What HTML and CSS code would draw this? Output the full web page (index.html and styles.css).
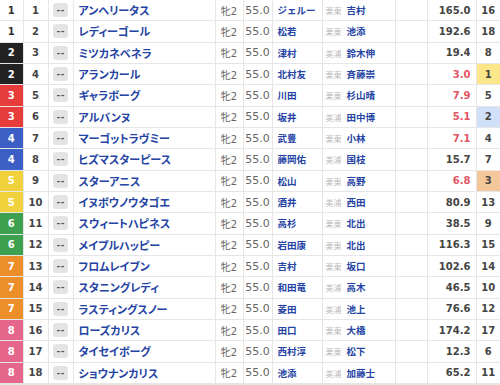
FILE: index.html
```html
<!DOCTYPE html>
<html lang="ja">
<head>
<meta charset="utf-8">
<link rel="stylesheet" href="styles.css">
</head>
<body>
<table class="race">
<colgroup>
<col class="c-waku"><col class="c-num"><col class="c-mark"><col class="c-name"><col class="c-sex"><col class="c-wt"><col class="c-jockey"><col class="c-trainer"><col class="c-blank"><col class="c-odds"><col class="c-pop">
</colgroup>
<tbody>
<tr><td class="waku w1">1</td><td class="num">1</td><td class="mark"><span class="btn">--</span></td><td class="name">アンヘリータス</td><td class="sex">牝2</td><td class="wt">55.0</td><td class="jockey">ジェルー</td><td class="trainer"><span class="area">栗東</span>吉村</td><td></td><td class="odds">165.0</td><td class="pop">16</td></tr>
<tr><td class="waku w1">1</td><td class="num">2</td><td class="mark"><span class="btn">--</span></td><td class="name">レディーゴール</td><td class="sex">牝2</td><td class="wt">55.0</td><td class="jockey">松若</td><td class="trainer"><span class="area">栗東</span>池添</td><td></td><td class="odds">192.6</td><td class="pop">18</td></tr>
<tr><td class="waku w2">2</td><td class="num">3</td><td class="mark"><span class="btn">--</span></td><td class="name">ミツカネベネラ</td><td class="sex">牝2</td><td class="wt">55.0</td><td class="jockey">津村</td><td class="trainer"><span class="area">美浦</span>鈴木伸</td><td></td><td class="odds">19.4</td><td class="pop">8</td></tr>
<tr><td class="waku w2">2</td><td class="num">4</td><td class="mark"><span class="btn">--</span></td><td class="name">アランカール</td><td class="sex">牝2</td><td class="wt">55.0</td><td class="jockey">北村友</td><td class="trainer"><span class="area">栗東</span>斉藤崇</td><td></td><td class="odds hot">3.0</td><td class="pop p1">1</td></tr>
<tr><td class="waku w3">3</td><td class="num">5</td><td class="mark"><span class="btn">--</span></td><td class="name">ギャラボーグ</td><td class="sex">牝2</td><td class="wt">55.0</td><td class="jockey">川田</td><td class="trainer"><span class="area">栗東</span>杉山晴</td><td></td><td class="odds hot">7.9</td><td class="pop">5</td></tr>
<tr><td class="waku w3">3</td><td class="num">6</td><td class="mark"><span class="btn">--</span></td><td class="name">アルバンヌ</td><td class="sex">牝2</td><td class="wt">55.0</td><td class="jockey">坂井</td><td class="trainer"><span class="area">美浦</span>田中博</td><td></td><td class="odds hot">5.1</td><td class="pop p2">2</td></tr>
<tr><td class="waku w4">4</td><td class="num">7</td><td class="mark"><span class="btn">--</span></td><td class="name">マーゴットラヴミー</td><td class="sex">牝2</td><td class="wt">55.0</td><td class="jockey">武豊</td><td class="trainer"><span class="area">栗東</span>小林</td><td></td><td class="odds hot">7.1</td><td class="pop">4</td></tr>
<tr><td class="waku w4">4</td><td class="num">8</td><td class="mark"><span class="btn">--</span></td><td class="name">ヒズマスターピース</td><td class="sex">牝2</td><td class="wt">55.0</td><td class="jockey">藤岡佑</td><td class="trainer"><span class="area">美浦</span>国枝</td><td></td><td class="odds">15.7</td><td class="pop">7</td></tr>
<tr><td class="waku w5">5</td><td class="num">9</td><td class="mark"><span class="btn">--</span></td><td class="name">スターアニス</td><td class="sex">牝2</td><td class="wt">55.0</td><td class="jockey">松山</td><td class="trainer"><span class="area">栗東</span>高野</td><td></td><td class="odds hot">6.8</td><td class="pop p3">3</td></tr>
<tr><td class="waku w5">5</td><td class="num">10</td><td class="mark"><span class="btn">--</span></td><td class="name">イヌボウノウタゴエ</td><td class="sex">牝2</td><td class="wt">55.0</td><td class="jockey">酒井</td><td class="trainer"><span class="area">美浦</span>西田</td><td></td><td class="odds">80.9</td><td class="pop">13</td></tr>
<tr><td class="waku w6">6</td><td class="num">11</td><td class="mark"><span class="btn">--</span></td><td class="name">スウィートハピネス</td><td class="sex">牝2</td><td class="wt">55.0</td><td class="jockey">高杉</td><td class="trainer"><span class="area">栗東</span>北出</td><td></td><td class="odds">38.5</td><td class="pop">9</td></tr>
<tr><td class="waku w6">6</td><td class="num">12</td><td class="mark"><span class="btn">--</span></td><td class="name">メイプルハッピー</td><td class="sex">牝2</td><td class="wt">55.0</td><td class="jockey">岩田康</td><td class="trainer"><span class="area">栗東</span>北出</td><td></td><td class="odds">116.3</td><td class="pop">15</td></tr>
<tr><td class="waku w7">7</td><td class="num">13</td><td class="mark"><span class="btn">--</span></td><td class="name">フロムレイブン</td><td class="sex">牝2</td><td class="wt">55.0</td><td class="jockey">吉村</td><td class="trainer"><span class="area">栗東</span>坂口</td><td></td><td class="odds">102.6</td><td class="pop">14</td></tr>
<tr><td class="waku w7">7</td><td class="num">14</td><td class="mark"><span class="btn">--</span></td><td class="name">スタニングレディ</td><td class="sex">牝2</td><td class="wt">55.0</td><td class="jockey">和田竜</td><td class="trainer"><span class="area">美浦</span>高木</td><td></td><td class="odds">46.5</td><td class="pop">10</td></tr>
<tr><td class="waku w7">7</td><td class="num">15</td><td class="mark"><span class="btn">--</span></td><td class="name">ラスティングスノー</td><td class="sex">牝2</td><td class="wt">55.0</td><td class="jockey">菱田</td><td class="trainer"><span class="area">美浦</span>池上</td><td></td><td class="odds">76.6</td><td class="pop">12</td></tr>
<tr><td class="waku w8">8</td><td class="num">16</td><td class="mark"><span class="btn">--</span></td><td class="name">ローズカリス</td><td class="sex">牝2</td><td class="wt">55.0</td><td class="jockey">田口</td><td class="trainer"><span class="area">栗東</span>大橋</td><td></td><td class="odds">174.2</td><td class="pop">17</td></tr>
<tr><td class="waku w8">8</td><td class="num">17</td><td class="mark"><span class="btn">--</span></td><td class="name">タイセイボーグ</td><td class="sex">牝2</td><td class="wt">55.0</td><td class="jockey">西村淳</td><td class="trainer"><span class="area">栗東</span>松下</td><td></td><td class="odds">12.3</td><td class="pop">6</td></tr>
<tr><td class="waku w8">8</td><td class="num">18</td><td class="mark"><span class="btn">--</span></td><td class="name">ショウナンカリス</td><td class="sex">牝2</td><td class="wt">55.0</td><td class="jockey">池添</td><td class="trainer"><span class="area">美浦</span>加藤士</td><td></td><td class="odds">65.2</td><td class="pop">11</td></tr>
</tbody>
</table>
</body>
</html>
```

FILE: styles.css
```css
html, body {
  margin: 0;
  padding: 0;
  background: #ffffff;
}
body {
  font-family: "DejaVu Sans", "Noto Sans CJK JP", sans-serif;
  font-size: 10px;
  color: #333;
}
.race {
  border-collapse: collapse;
  table-layout: fixed;
  width: 500px;
  border-bottom: 2px solid #e6e6e6;
}
.c-waku { width: 23px; }
.c-num { width: 25px; }
.c-mark { width: 25px; }
.c-name { width: 142px; }
.c-sex { width: 28px; }
.c-wt { width: 29px; }
.c-jockey { width: 50px; }
.c-trainer { width: 73px; }
.c-blank { width: 32px; }
.c-odds { width: 49px; }
.c-pop { width: 24px; }

.race td {
  border: 1px solid #e6e6e6;
  height: 20.33px;
  padding: 0;
  white-space: nowrap;
  overflow: hidden;
  vertical-align: middle;
}
.race tr:first-child td { border-top: none; }
.race td:first-child { border-left: none; }
.race td:last-child { border-right: none; }

.waku {
  text-align: center;
  font-weight: bold;
  font-size: 10px;
  color: #fff;
}
.w1 { background: #fff; color: #333; }
.w2 { background: #222; }
.w3 { background: #e63c3c; }
.w4 { background: #3b5fc4; }
.w5 { background: #f0d13b; }
.w6 { background: #3da04e; }
.w7 { background: #ec8f2b; }
.w8 { background: #e5668a; }

.num {
  text-align: center;
  font-weight: bold;
  color: #444;
}
.mark { text-align: center; }
.btn {
  display: inline-block;
  width: 15px;
  height: 14px;
  line-height: 14px;
  background: #e4e4e4;
  border-radius: 3px;
  font-family: "DejaVu Sans", sans-serif;
  font-size: 9px;
  font-weight: bold;
  color: #555;
  letter-spacing: 0.5px;
  text-indent: 0.5px;
  text-align: center;
  vertical-align: middle;
}
.name {
  padding-left: 5px !important;
  font-family: "Noto Sans CJK JP", sans-serif;
  font-weight: bold;
  font-size: 11px;
  font-feature-settings: "palt";
  color: #2443a3;
}
.sex, .wt {
  text-align: center;
  color: #666;
  font-size: 11px;
}
.sex {
  font-family: "DejaVu Sans", "Noto Sans CJK JP", sans-serif;
  font-size: 10px;
}
.jockey {
  padding-left: 5px !important;
  font-family: "Noto Sans CJK JP", sans-serif;
  font-weight: bold;
  font-size: 9.5px;
  color: #2443a3;
}
.trainer {
  padding-left: 3px !important;
  font-family: "Noto Sans CJK JP", sans-serif;
  font-weight: bold;
  font-size: 9.5px;
  color: #2443a3;
}
.area {
  font-weight: normal;
  font-size: 8px;
  color: #bbb;
  margin-right: 5px;
}
.odds {
  text-align: right;
  padding-right: 5px !important;
  font-weight: bold;
  color: #444;
}
.odds.hot { color: #e25563; }
.pop {
  text-align: center;
  font-weight: bold;
  color: #444;
}
.p1 { background: #fbe78a; }
.p2 { background: #cfe0f8; }
.p3 { background: #f4c79a; }
```
